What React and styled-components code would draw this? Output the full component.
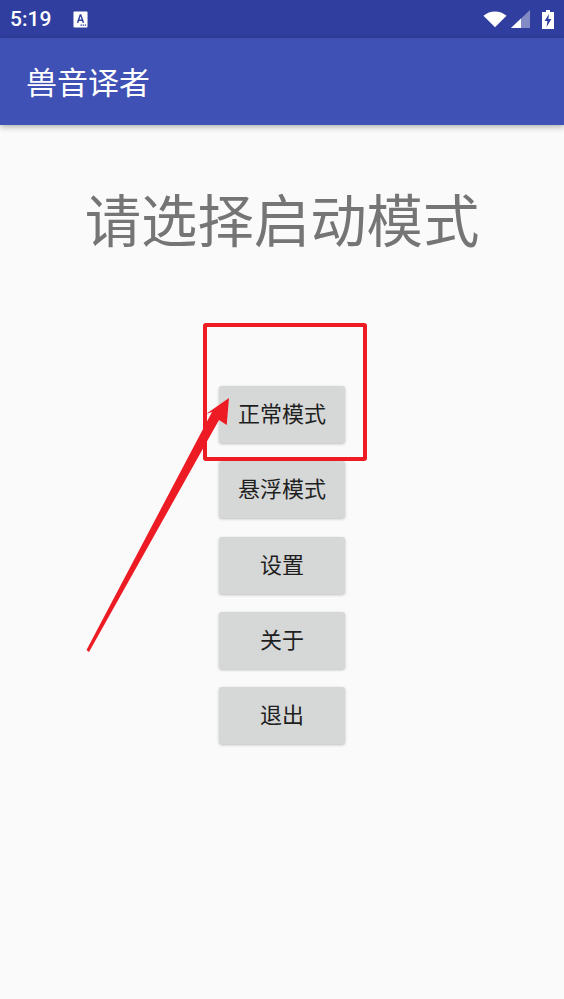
import React from 'react'
import styled, { createGlobalStyle } from 'styled-components'

const Global = createGlobalStyle`
  html, body {
    margin: 0;
    padding: 0;
    background: #fafafa;
  }
`;

const Screen = styled.div`
  position: relative;
  width: 564px;
  height: 999px;
  overflow: hidden;
  background: #fafafa;
  font-family: "Noto Sans CJK SC", "Noto Sans", sans-serif;
`;

const StatusBar = styled.div`
  display: flex;
  align-items: center;
  height: 38px;
  padding: 0 10px;
  box-sizing: border-box;
  background: #303f9f;
  color: #fff;
`;

const Clock = styled.span`
  font-family: Roboto, sans-serif;
  font-size: 21px;
  font-weight: 500;
  width: 63px;
`;

const StatusRight = styled.div`
  display: flex;
  align-items: center;
  margin-left: auto;
`;

const AppBar = styled.header`
  display: flex;
  align-items: center;
  height: 87px;
  padding: 0 26px 2px;
  box-sizing: border-box;
  background: #3f51b5;
  box-shadow: 0 2px 6px rgba(0, 0, 0, 0.3);
`;

const AppTitle = styled.h1`
  margin: 0;
  color: #fff;
  font-size: 31px;
  font-weight: 400;
  line-height: 1;
`;

const Main = styled.main`
  display: flex;
  flex-direction: column;
  align-items: center;
`;

const Heading = styled.h2`
  margin: 52px 0 0;
  color: #757575;
  font-size: 56.4px;
  font-weight: 400;
  line-height: 82px;
`;

const Buttons = styled.div`
  display: flex;
  flex-direction: column;
  align-items: center;
  gap: 18.3px;
  margin-top: 127px;
`;

const Button = styled.button`
  width: 126px;
  height: 57px;
  padding: 0 0 5px;
  border: 0;
  border-radius: 3px;
  background: #d6d7d7;
  color: #1f1f1f;
  font-family: inherit;
  font-size: 22px;
  box-shadow: 0 1px 3px rgba(0, 0, 0, 0.25);
`;

const Annotation = styled.svg`
  position: absolute;
  top: 0;
  left: 0;
  pointer-events: none;
`;

const NoticeIcon = () => (
  <svg width="15" height="17" viewBox="0 0 16 18">
    <rect x="0.5" y="0.5" width="15" height="17" rx="1" fill="#fff" />
    <path d="M4 12.5 L7.2 3.5 H8.8 L12 12.5 H10.2 L9.6 10.5 H6.4 L5.8 12.5 Z M6.9 8.9 H9.1 L8 5.5 Z" fill="#303f9f" fillRule="evenodd" />
    <path d="M8 14.2h1.5v1.5H8zM10.3 14.2h1.5v1.5h-1.5zM12.6 14.2h1.5v1.5h-1.5z" fill="#303f9f" />
  </svg>
);

const WifiIcon = () => (
  <svg width="24" height="18" viewBox="0 0 26 18" style={{ marginRight: 4 }}>
    <path d="M0.5 5.5 C7.5 -0.8 18.5 -0.8 25.5 5.5 L13 18 Z" fill="#fff" />
  </svg>
);

const SignalIcon = () => (
  <svg width="19" height="18" viewBox="0 0 19 18" style={{ marginRight: 12 }}>
    <path d="M0 18 L19 0 V18 Z" fill="#fff" fillOpacity="0.4" />
    <path d="M0 18 L10 8.5 V18 Z" fill="#fff" />
  </svg>
);

const BatteryIcon = () => (
  <svg width="12" height="19" viewBox="0 0 12 19">
    <path d="M4 0 H8 V2 H12 V19 H0 V2 H4 Z" fill="#fff" />
    <path d="M7 4 L2.6 11 H5.4 L4.6 17 L9.4 9 H6.4 Z" fill="#303f9f" />
  </svg>
);

const modes = ['正常模式', '悬浮模式', '设置', '关于', '退出'];

export default function App() {
  return (
    <Screen>
      <Global />
      <StatusBar>
        <Clock>5:19</Clock>
        <NoticeIcon />
        <StatusRight>
          <WifiIcon />
          <SignalIcon />
          <BatteryIcon />
        </StatusRight>
      </StatusBar>
      <AppBar>
        <AppTitle>兽音译者</AppTitle>
      </AppBar>
      <Main>
        <Heading>请选择启动模式</Heading>
        <Buttons>
          {modes.map((label) => (
            <Button key={label}>{label}</Button>
          ))}
        </Buttons>
      </Main>
      <Annotation width="564" height="999" viewBox="0 0 564 999">
        <rect x="205" y="325" width="160" height="134" rx="1" fill="none" stroke="#ed1c24" strokeWidth="4" />
        <path d="M86.5 650 L212 412 L206 414 L229 398 L226.7 425 L219 420 L89 652 Z" fill="#ed1c24" />
      </Annotation>
    </Screen>
  )
}
